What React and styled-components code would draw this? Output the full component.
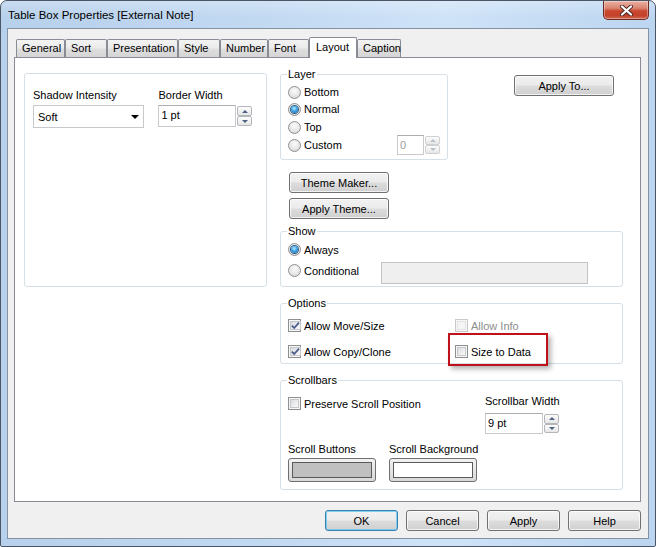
import React from 'react';
import styled, { createGlobalStyle } from 'styled-components';

const Global = createGlobalStyle`
  html, body { margin: 0; padding: 0; background: #ffffff; }
  body { font-family: "Liberation Sans", Arial, sans-serif; font-size: 11px; color: #000; }
  #root { width: 656px; height: 547px; }
  * { box-sizing: border-box; }
`;

const Window = styled.div`
  width: 656px;
  height: 547px;
  display: flex;
  flex-direction: column;
  border: 1px solid #4a5566;
  border-radius: 7px 7px 2px 2px;
  background: linear-gradient(to right, #b7d0eb 0%, #c2d9f2 40%, #cfe3f8 68%, #bcd5f0 100%);
  overflow: hidden;
`;

const TitleBar = styled.div`
  height: 27px;
  flex: none;
  display: flex;
  align-items: flex-start;
  padding-left: 7px;
  background: linear-gradient(rgba(255,255,255,0.25), rgba(255,255,255,0) 60%);
`;

const Title = styled.div`
  padding-top: 7px;
  line-height: 14px;
  font-size: 11.5px;
  color: #000;
`;

const CloseButton = styled.div`
  margin-left: auto;
  margin-right: 6px;
  width: 46px;
  height: 19px;
  border: 1px solid #6e2a20;
  border-top: none;
  border-radius: 0 0 5px 5px;
  background: linear-gradient(#eab2a4 0%, #da8470 40%, #c9472f 55%, #c4402b 80%, #d0694f 100%);
  box-shadow: inset 0 0 0 1px rgba(255,255,255,0.35);
  display: flex;
  align-items: center;
  justify-content: center;
`;

const Client = styled.div`
  flex: none;
  height: 511px;
  margin: 0 6px 7px 6px;
  border: 1px solid #8592a4;
  background: #f0f0f0;
  padding: 8px 7px 0 6px;
  display: flex;
  flex-direction: column;
`;

const TabStrip = styled.div`
  height: 20px;
  display: flex;
  align-items: flex-end;
  padding-left: 2px;
`;

const Tab = styled.div`
  width: ${p => p.$w}px;
  height: ${p => (p.$active ? 21 : 18)}px;
  margin-bottom: ${p => (p.$active ? -1 : 0)}px;
  position: relative;
  z-index: ${p => (p.$active ? 1 : 0)};
  border: 1px solid #898c95;
  border-bottom: ${p => (p.$active ? 'none' : '0')};
  border-radius: 2px 2px 0 0;
  background: ${p => (p.$active ? '#ffffff' : 'linear-gradient(#f3f3f3 0%, #ebebeb 45%, #dedede 55%, #d5d5d5 100%)')};
  padding-left: ${p => (p.$active ? 6 : 5)}px;
  line-height: ${p => (p.$active ? 18 : 17)}px;
  white-space: nowrap;
`;

const Panel = styled.div`
  height: 445px;
  border: 1px solid #898c95;
  background: #ffffff;
  padding: 10px 0 0 9px;
  display: grid;
  grid-template-columns: 243px 343px;
  column-gap: 13px;
  align-items: start;
`;

const PlainGroup = styled.div`
  margin-top: 5px;
  height: 214px;
  border: 1px solid #d5dfe5;
  border-radius: 3px;
  padding: 15px 8px 0 8px;
  display: flex;
`;

const Field = styled.div`
  width: ${p => p.$w}px;
  display: flex;
  flex-direction: column;
  align-items: flex-start;
`;

const Label = styled.div`
  line-height: 13px;
  white-space: nowrap;
  color: #000;
`;

const Combo = styled.div`
  margin-top: 3px;
  width: 111px;
  height: 23px;
  border: 1px solid #c6c8cc;
  background: #fff;
  display: flex;
  align-items: center;
  padding-left: 4px;
  padding-top: 1px;
`;

const ComboArrow = styled.span`
  margin-left: auto;
  margin-right: 4px;
  width: 0;
  height: 0;
  border-left: 4px solid transparent;
  border-right: 4px solid transparent;
  border-top: 4px solid #000;
`;

const Spin = styled.div`
  margin-top: ${p => p.$mt || 0}px;
  display: flex;
  align-items: flex-start;
  height: ${p => p.$h}px;
`;

const SpinInput = styled.div`
  width: ${p => p.$w}px;
  height: 100%;
  border: 1px solid #c8cace;
  border-top-color: #abadb3;
  background: #fff;
  padding: 2px 2px 0 2px;
  line-height: 14px;
  color: ${p => (p.$disabled ? '#a0a0a0' : '#000')};
`;

const SpinButtons = styled.div`
  width: 16px;
  height: 100%;
  padding: 1px 0 1px 1px;
  display: flex;
  flex-direction: column;
`;

const SpinBtn = styled.div`
  flex: 1;
  border: 1px solid ${p => (p.$disabled ? '#d0d0d0' : '#b3b6bb')};
  border-radius: 2px;
  background: linear-gradient(#fdfdfd, #e6e6e6);
  display: flex;
  align-items: center;
  justify-content: center;
`;

const Tri = styled.span`
  width: 0;
  height: 0;
  border-left: 3px solid transparent;
  border-right: 3px solid transparent;
  ${p => (p.$down ? 'border-top' : 'border-bottom')}: 3px solid ${p => (p.$disabled ? '#b8c0cc' : '#4d6185')};
`;

const RightCol = styled.div`
  display: flex;
  flex-direction: column;
  align-items: stretch;
`;

const TopRow = styled.div`
  display: flex;
  align-items: flex-start;
  justify-content: space-between;
  padding-right: 9px;
`;

const Group = styled.fieldset`
  margin: ${p => p.$mt || 0}px 0 0 0;
  min-width: 0;
  width: ${p => (p.$w ? `${p.$w}px` : 'auto')};
  border: 1px solid #d5dfe5;
  border-radius: 3px;
  padding: ${p => p.$pad};
`;

const Legend = styled.legend`
  padding: 0 1px;
  margin-left: -1px;
  line-height: 13px;
  font-size: 11px;
`;

const Row = styled.div`
  height: ${p => p.$h || 17}px;
  margin-top: ${p => p.$mt || 0}px;
  display: flex;
  align-items: ${p => p.$align || 'center'};
`;

const OptionLabel = styled.label`
  height: 17px;
  width: ${p => (p.$w ? `${p.$w}px` : 'auto')};
  flex: none;
  display: flex;
  align-items: center;
  gap: 3px;
  white-space: nowrap;
  color: ${p => (p.$disabled ? '#8d8d8d' : '#000')};
  position: relative;
`;

const RadioDot = styled.span`
  width: 13px;
  height: 13px;
  flex: none;
  border-radius: 50%;
  border: 1px solid #8e8f8f;
  background: radial-gradient(circle at 50% 35%, #fbfbfb 0%, #e7e7e7 55%, #cfcfcf 100%);
  display: flex;
  align-items: center;
  justify-content: center;
  &::after {
    content: '';
    display: ${p => (p.$checked ? 'block' : 'none')};
    width: 7px;
    height: 7px;
    border-radius: 50%;
    background: radial-gradient(circle at 45% 35%, #b9eeff 0%, #3fa3e6 45%, #1a5c98 100%);
    box-shadow: 0 0 0 1px #2c5e8b;
  }
`;

const CheckBox = styled.span`
  width: 13px;
  height: 13px;
  flex: none;
  border: 1px solid ${p => (p.$disabled ? '#c9c9c9' : '#8e8f8f')};
  background: #f7f7f7;
  padding: 1px;
  display: flex;
`;

const CheckInner = styled.span`
  flex: 1;
  border: 1px solid ${p => (p.$disabled ? '#e4e4e4' : '#c5c7cb')};
  background: ${p => (p.$disabled ? '#f5f5f5' : 'linear-gradient(135deg, #d9dbde 0%, #f2f2f2 70%, #fafafa 100%)')};
  display: flex;
  align-items: center;
  justify-content: center;
  overflow: visible;
`;

const Highlight = styled(OptionLabel)`
  &::after {
    content: '';
    position: absolute;
    left: -7px;
    top: -10px;
    width: 96px;
    height: 29px;
    border: 2px solid #c0101c;
    box-shadow: 3px 3px 5px rgba(0, 0, 0, 0.3);
    pointer-events: none;
  }
`;

const Btn = styled.button`
  width: ${p => p.$w}px;
  height: 21px;
  margin: ${p => p.$m || '0'};
  padding: 0;
  font: inherit;
  color: #000;
  border: 1px solid ${p => (p.$default ? '#3c7fb1' : '#707070')};
  border-radius: 3px;
  background: linear-gradient(#f2f2f2 0%, #ebebeb 48%, #dddddd 52%, #cfcfcf 100%);
  box-shadow: inset 0 0 0 1px ${p => (p.$default ? 'rgba(100, 200, 245, 0.8)' : 'rgba(255,255,255,0.75)')};
  line-height: 18px;
  white-space: nowrap;
  flex: none;
`;

const ButtonStack = styled.div`
  margin: 12px 0 0 9px;
  display: flex;
  flex-direction: column;
  gap: 5px;
`;

const CondInput = styled.div`
  width: 207px;
  height: 22px;
  border: 1px solid #c3c3c3;
  background: #efefef;
`;

const OptionsGrid = styled.div`
  display: grid;
  grid-template-columns: 167px auto;
  grid-auto-rows: 17px;
  row-gap: 9px;
  align-items: center;
`;

const ScrollTop = styled.div`
  display: grid;
  grid-template-columns: 197px auto;
  align-items: start;
`;

const ScrollBottom = styled.div`
  margin-top: 9px;
  display: grid;
  grid-template-columns: 101px auto;
`;

const ColorButton = styled.div`
  margin-top: 2px;
  width: 88px;
  height: 24px;
  flex: none;
  border: 1px solid #707070;
  border-radius: 3px;
  background: linear-gradient(#f2f2f2, #d8d8d8);
  padding: 3px;
  display: flex;
`;

const Swatch = styled.div`
  flex: 1;
  border: 1px solid #5a5a5a;
  background: ${p => p.$color};
`;

const Footer = styled.div`
  margin-top: 8px;
  display: flex;
  justify-content: flex-end;
  gap: 8px;
`;

const tabs = [
  ['General', 49], ['Sort', 42], ['Presentation', 71], ['Style', 42],
  ['Number', 48], ['Font', 41], ['Layout', 48], ['Caption', 44],
];

function Radio({ checked, children, w }) {
  return (
    <OptionLabel $w={w}>
      <RadioDot $checked={checked} />
      {children}
    </OptionLabel>
  );
}

function Check({ checked, disabled, children, highlight }) {
  const L = highlight ? Highlight : OptionLabel;
  return (
    <L $disabled={disabled}>
      <CheckBox $disabled={disabled}>
        <CheckInner $disabled={disabled}>
          {checked && (
            <svg width="9" height="9" viewBox="0 0 9 9" style={{ overflow: 'visible' }}>
              <path d="M0.8 4.6 L3.2 7 L8 1.6" fill="none" stroke="#4a5d8c" strokeWidth="1.8" />
            </svg>
          )}
        </CheckInner>
      </CheckBox>
      {children}
    </L>
  );
}

function SpinBox({ w, h, mt, value, disabled }) {
  return (
    <Spin $h={h} $mt={mt}>
      <SpinInput $w={w} $disabled={disabled}>{value}</SpinInput>
      <SpinButtons>
        <SpinBtn $disabled={disabled}><Tri $disabled={disabled} /></SpinBtn>
        <SpinBtn $disabled={disabled}><Tri $down $disabled={disabled} /></SpinBtn>
      </SpinButtons>
    </Spin>
  );
}

export default function App() {
  return (
    <>
      <Global />
      <Window>
        <TitleBar>
          <Title>Table Box Properties [External Note]</Title>
          <CloseButton>
            <svg width="13" height="11" viewBox="0 0 13 11">
              <path d="M2 1.5 L11 9.5 M11 1.5 L2 9.5" stroke="#4a2a26" strokeWidth="4" strokeLinecap="round" />
              <path d="M2 1.5 L11 9.5 M11 1.5 L2 9.5" stroke="#ffffff" strokeWidth="2.2" strokeLinecap="round" />
            </svg>
          </CloseButton>
        </TitleBar>
        <Client>
          <TabStrip>
            {tabs.map(([name, w]) => (
              <Tab key={name} $w={w} $active={name === 'Layout'}>{name}</Tab>
            ))}
          </TabStrip>
          <Panel>
            <PlainGroup>
              <Field $w={126}>
                <Label>Shadow Intensity</Label>
                <Combo>
                  Soft
                  <ComboArrow />
                </Combo>
              </Field>
              <Field $w={100}>
                <Label>Border Width</Label>
                <SpinBox w={78} h={22} mt={3} value="1 pt" />
              </Field>
            </PlainGroup>

            <RightCol>
              <TopRow>
                <Group $w={168} $pad="3px 7px 5px 7px">
                  <Legend>Layer</Legend>
                  <Row $h={16}><Radio>Bottom</Radio></Row>
                  <Row $h={18}><Radio checked>Normal</Radio></Row>
                  <Row $h={18}><Radio>Top</Radio></Row>
                  <Row $h={18}>
                    <Radio>Custom</Radio>
                    <div style={{ marginLeft: 'auto' }}>
                      <SpinBox w={27} h={20} value="0" disabled />
                    </div>
                  </Row>
                </Group>
                <Btn $w={100} $m="7px 0 0 0">Apply To...</Btn>
              </TopRow>

              <ButtonStack>
                <Btn $w={100}>Theme Maker...</Btn>
                <Btn $w={100}>Apply Theme...</Btn>
              </ButtonStack>

              <Group $mt={6} $pad="3px 7px 2px 7px">
                <Legend>Show</Legend>
                <Row><Radio checked>Always</Radio></Row>
                <Row $h={22} $mt={4} $align="flex-start">
                  <Radio w={93}>Conditional</Radio>
                  <CondInput />
                </Row>
              </Group>

              <Group $mt={10} $pad="7px 7px 3px 7px">
                <Legend>Options</Legend>
                <OptionsGrid>
                  <Check checked>Allow Move/Size</Check>
                  <Check disabled>Allow Info</Check>
                  <Check checked>Allow Copy/Clone</Check>
                  <Check highlight>Size to Data</Check>
                </OptionsGrid>
              </Group>

              <Group $mt={10} $pad="8px 7px 7px 7px">
                <Legend>Scrollbars</Legend>
                <ScrollTop>
                  <Row><Check>Preserve Scroll Position</Check></Row>
                  <Field $w={100}>
                    <Label>Scrollbar Width</Label>
                    <SpinBox w={58} h={21} mt={5} value="9 pt" />
                  </Field>
                </ScrollTop>
                <ScrollBottom>
                  <Field $w={101}>
                    <Label>Scroll Buttons</Label>
                    <ColorButton><Swatch $color="#c0c0c0" /></ColorButton>
                  </Field>
                  <Field $w={100}>
                    <Label>Scroll Background</Label>
                    <ColorButton><Swatch $color="#ffffff" /></ColorButton>
                  </Field>
                </ScrollBottom>
              </Group>
            </RightCol>
          </Panel>
          <Footer>
            <Btn $w={73} $default>OK</Btn>
            <Btn $w={73}>Cancel</Btn>
            <Btn $w={73}>Apply</Btn>
            <Btn $w={73}>Help</Btn>
          </Footer>
        </Client>
      </Window>
    </>
  );
}
